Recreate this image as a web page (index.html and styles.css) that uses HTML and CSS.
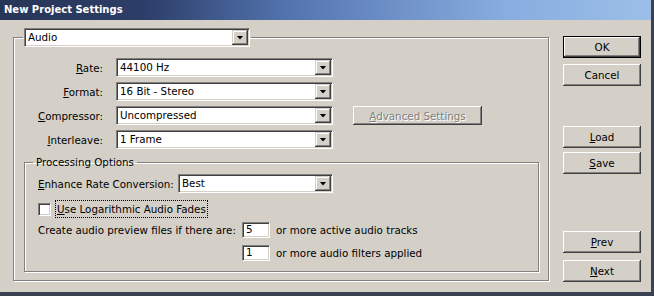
FILE: index.html
```html
<html>
  <head>
    <title>New Project Settings</title>
    <link rel="stylesheet" href="styles.css">
  </head>

  <body>
    <div class="window">
      <div class="titlebar">New Project Settings</div>

      <div class="client">
        <fieldset class="group main-group">
          <legend class="combo-legend">
            <div class="combo audio-combo">
              <span class="combo-value">Audio</span>
              <span class="combo-arrow"></span>
            </div>
          </legend>

          <div class="field-row">
            <label class="field-label"><u>R</u>ate:</label>
            <div class="combo field-combo">
              <span class="combo-value">44100 Hz</span>
              <span class="combo-arrow"></span>
            </div>
          </div>
          <div class="field-row">
            <label class="field-label"><u>F</u>ormat:</label>
            <div class="combo field-combo">
              <span class="combo-value">16 Bit - Stereo</span>
              <span class="combo-arrow"></span>
            </div>
          </div>
          <div class="field-row">
            <label class="field-label"><u>C</u>ompressor:</label>
            <div class="combo field-combo">
              <span class="combo-value">Uncompressed</span>
              <span class="combo-arrow"></span>
            </div>
            <button class="btn btn-disabled advanced"><u>A</u>dvanced Settings</button>
          </div>
          <div class="field-row">
            <label class="field-label"><u>I</u>nterleave:</label>
            <div class="combo field-combo">
              <span class="combo-value">1 Frame</span>
              <span class="combo-arrow"></span>
            </div>
          </div>

          <fieldset class="group processing">
            <legend class="text-legend">Processing Options</legend>
            <div class="proc-body">
              <div class="enhance-row">
                <label class="enhance-label"><u>E</u>nhance Rate Conversion:</label>
                <div class="combo enhance-combo">
                  <span class="combo-value">Best</span>
                  <span class="combo-arrow"></span>
                </div>
              </div>

              <div class="check-row">
                <span class="checkbox"></span>
                <span class="check-label"><u>U</u>se Logarithmic Audio Fades</span>
              </div>

              <div class="preview-grid">
                <span>Create audio preview files if there are:</span>
                <span class="textbox">5</span>
                <span class="after-box">or more active audio tracks</span>
                <span></span>
                <span class="textbox">1</span>
                <span class="after-box">or more audio filters applied</span>
              </div>
            </div>
          </fieldset>
        </fieldset>

        <div class="button-column">
          <button class="btn btn-default ok-btn">OK</button>
          <button class="btn cancel-btn">Cancel</button>
          <button class="btn load-btn"><u>L</u>oad</button>
          <button class="btn save-btn"><u>S</u>ave</button>
          <button class="btn prev-btn"><u>P</u>rev</button>
          <button class="btn next-btn"><u>N</u>ext</button>
        </div>
      </div>
    </div>
  </body>
</html>
```

FILE: styles.css
```css
html,
body {
  margin: 0;
  background: #3a4150;
}

body {
  font: 10.3px "DejaVu Sans", sans-serif;
  color: #000;
}

.window {
  width: 651px;
  height: 292px;
  background: #d4d0c8;
  overflow: hidden;
}

.titlebar {
  height: 20px;
  line-height: 20px;
  padding-left: 4px;
  color: #fff;
  font-size: 10px;
  font-weight: bold;
  background: linear-gradient(
    90deg,
    #283656 0%,
    #2c3d68 22%,
    #4f6fa8 42%,
    #6a8cc4 58%,
    #88addf 78%,
    #9cbfe8 100%
  );
}

.client {
  display: flex;
  align-items: flex-start;
  padding: 8px 0 0 13px;
}

/* etched group frame: grey line with a white line inside and below */
.group {
  margin: 0;
  border: 1px solid #808080;
  box-shadow: inset 1px 1px 0 #fff, 1px 1px 0 #fff;
  min-width: 0;
}

.main-group {
  width: 536px;
  box-sizing: border-box;
  padding: 11px 9px 8px 9px;
}

.combo-legend {
  padding: 0 1px;
}

.text-legend {
  padding: 0 3px;
  line-height: 13px;
}

/* drop-down list */
.combo {
  display: flex;
  box-sizing: border-box;
  height: 19px;
  background: #fff;
  border-top: 1px solid #808080;
  border-left: 1px solid #808080;
  border-right: 1px solid #fff;
  border-bottom: 1px solid #fff;
  box-shadow: inset 1px 1px 0 #404040, inset -1px -1px 0 #d4d0c8;
  padding: 1px;
}

.combo-value {
  flex: 1;
  line-height: 15px;
  padding-left: 2px;
  white-space: nowrap;
}

.combo-arrow {
  width: 16px;
  height: 15px;
  display: flex;
  align-items: center;
  justify-content: center;
  background: #d4d0c8;
  box-shadow: inset -1px -1px 0 #404040, inset 1px 1px 0 #d4d0c8,
    inset -2px -2px 0 #808080, inset 2px 2px 0 #fff;
}

.combo-arrow::after {
  content: "";
  width: 7px;
  height: 4px;
  background: #000;
  clip-path: polygon(0 0, 100% 0, 50% 100%);
}

.audio-combo {
  width: 226px;
}

.field-row {
  display: flex;
  align-items: center;
  height: 19px;
  margin-bottom: 5px;
}

.field-label {
  width: 80px;
  margin-right: 13px;
  text-align: right;
}

.field-combo {
  width: 217px;
}

/* push buttons */
.btn {
  font: inherit;
  color: #000;
  background: #d4d0c8;
  border: none;
  padding: 0;
  box-sizing: border-box;
  width: 78px;
  height: 22px;
  box-shadow: inset -1px -1px 0 #404040, inset 1px 1px 0 #fff,
    inset -2px -2px 0 #808080;
}

.btn-default {
  border: 1px solid #000;
}

.btn-disabled {
  color: #808080;
  text-shadow: 1px 1px 0 #fff;
}

.advanced {
  width: 129px;
  height: 19px;
  margin-left: 20px;
}

.processing {
  /* collapses with the 5px under the last row */
  margin: 7px 0 0 1px;
  padding: 5px 9px 10px 8px;
}

.proc-body {
  padding-left: 5px;
}

.enhance-row {
  display: flex;
  align-items: center;
}

.enhance-label {
  width: 140px;
}

.enhance-combo {
  width: 155px;
}

.check-row {
  display: flex;
  align-items: center;
  height: 18px;
  margin-top: 7px;
}

.checkbox {
  box-sizing: border-box;
  width: 13px;
  height: 13px;
  background: #fff;
  border-top: 1px solid #808080;
  border-left: 1px solid #808080;
  border-right: 1px solid #fff;
  border-bottom: 1px solid #fff;
  box-shadow: inset 1px 1px 0 #404040, inset -1px -1px 0 #d4d0c8;
}

.check-label {
  margin-left: 4px;
  padding: 0 1px;
  line-height: 16px;
  border: 1px dotted #000;
}

.preview-grid {
  display: grid;
  grid-template-columns: 204px 28px auto;
  grid-auto-rows: 16px;
  row-gap: 7px;
  align-items: center;
  margin-top: 4px;
}

.textbox {
  box-sizing: border-box;
  height: 16px;
  line-height: 12px;
  padding-left: 3px;
  background: #fff;
  border-top: 1px solid #808080;
  border-left: 1px solid #808080;
  border-right: 1px solid #fff;
  border-bottom: 1px solid #fff;
  box-shadow: inset 1px 1px 0 #404040, inset -1px -1px 0 #d4d0c8;
}

.after-box {
  margin-left: 6px;
}

.button-column {
  display: flex;
  flex-direction: column;
  margin-left: 14px;
}

.ok-btn {
  margin-top: 8px;
}

.cancel-btn {
  margin-top: 6px;
}

.load-btn {
  margin-top: 40px;
}

.save-btn {
  margin-top: 4px;
}

.prev-btn {
  margin-top: 57px;
}

.next-btn {
  margin-top: 7px;
}
```
